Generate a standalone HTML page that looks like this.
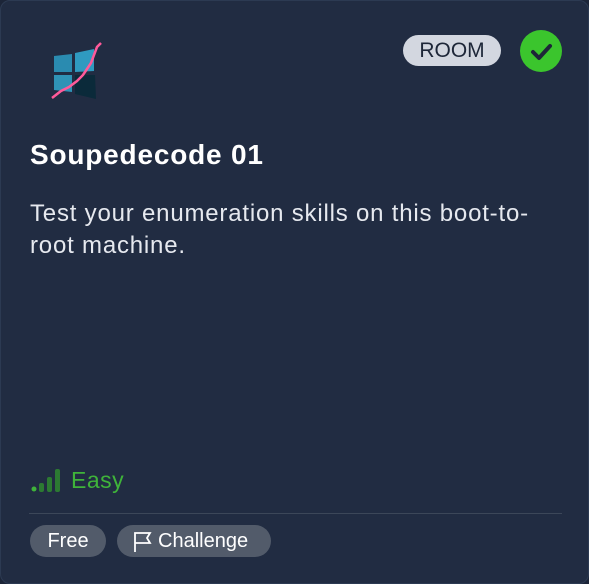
<!DOCTYPE html><html><head><style>
body{margin:0;background:#1c2538;width:589px;height:584px;overflow:hidden;font-family:"Liberation Sans",sans-serif}
.card{position:absolute;left:0;top:0;width:587px;height:582px;border:1px solid #2c3a52;border-radius:10px;background:#212c42}
.room{position:absolute;left:402px;top:34px;width:98px;height:31px;border-radius:16px;background:#d3d7e0;color:#1d2638;font-size:21px;line-height:31px;text-align:center}
.chk{position:absolute;left:519px;top:29px;width:42px;height:42px;border-radius:50%;background:#3bc52d}
h1{position:absolute;left:29px;top:138px;margin:0;color:#fff;font-size:28px;font-weight:bold;letter-spacing:0.8px}
p{position:absolute;left:29px;top:197px;margin:0;color:#e6e9ef;font-size:24px;line-height:32px;width:530px;letter-spacing:0.8px}
.easy{position:absolute;left:70px;top:466px;color:#3fb33a;font-size:23px;letter-spacing:0.5px}
.hr{position:absolute;left:28px;top:512px;width:533px;height:1px;background:#3c4759}
.pill{position:absolute;top:524px;height:32px;border-radius:16px;background:#525b6a;color:#fff;font-size:20px;line-height:32px}
</style></head><body><div class="card">
<svg style="position:absolute;left:44px;top:38px" width="64" height="64" viewBox="0 0 64 64">
<polygon points="9,17 27,15 27,33 9,33" fill="#2a8bb0"/><polygon points="30,14 49,10 49,32 30,33" fill="#2f9ac0"/>
<polygon points="9,36 27,36 27,53 9,51" fill="#2f93b6"/><polygon points="30,36 50,36 51,60 30,55" fill="#0b2a3a"/>
<polyline points="7,59 16,52 24,48 32,42 38,36 42,30 46,24 49,16 52,8 56,4" fill="none" stroke="#ff5a9a" stroke-width="2.5"/>
</svg>
<div class="room">ROOM</div>
<div class="chk"><svg width="42" height="42"><polyline points="13,22 19,28 30,16" fill="none" stroke="#1d2638" stroke-width="4" stroke-linecap="round" stroke-linejoin="round"/></svg></div>
<h1>Soupedecode 01</h1>
<p>Test your enumeration skills on this boot-to-root machine.</p>
<svg style="position:absolute;left:30px;top:466px" width="30" height="26"><circle cx="3" cy="22" r="2.5" fill="#3fb33a"/><rect x="8" y="16" width="5" height="9" rx="2" fill="#2c7a32"/><rect x="16" y="10" width="5" height="15" rx="2" fill="#2c7a32"/><rect x="24" y="2" width="5" height="23" rx="2" fill="#2c7a32"/></svg>
<div class="easy">Easy</div>
<div class="hr"></div>
<div class="pill" style="left:29px;width:76px;text-align:center">Free</div>
<div class="pill" style="left:116px;width:154px"><svg style="position:absolute;left:16px;top:6px" width="20" height="22"><path d="M2 21V2h15l-3 5 3 5H2" fill="none" stroke="#fff" stroke-width="1.8"/></svg><span style="position:absolute;left:41px">Challenge</span></div>
</div></body></html>
